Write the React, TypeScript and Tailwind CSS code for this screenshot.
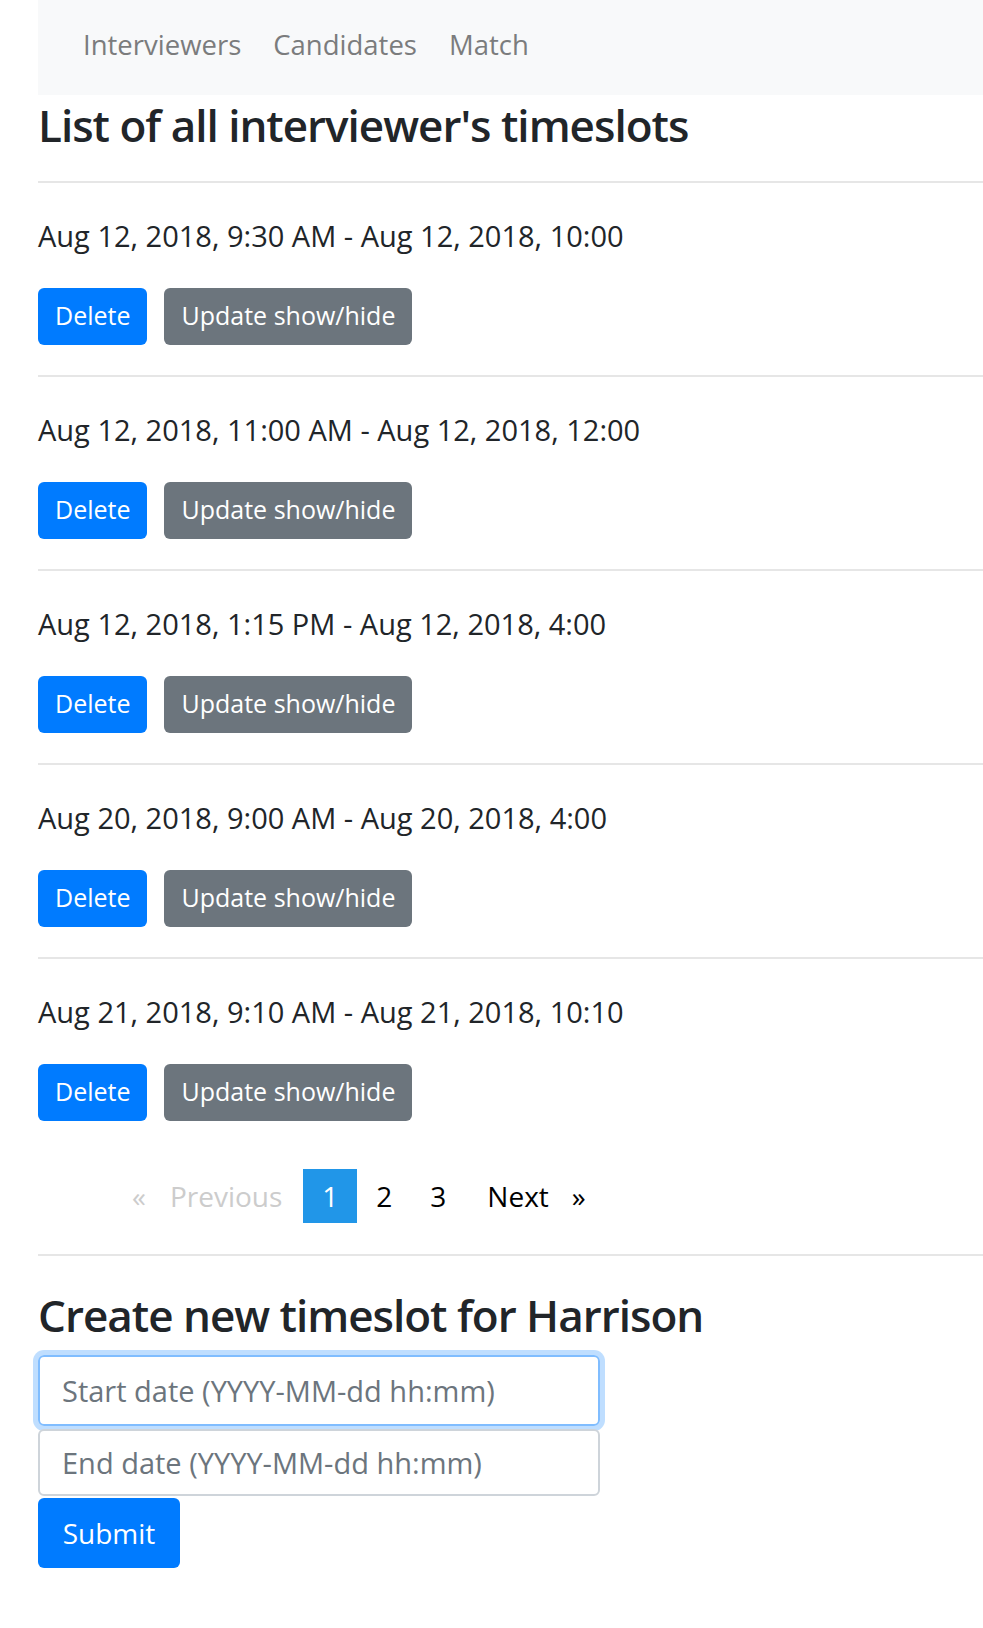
const slots = [
  "Aug 12, 2018, 9:30 AM - Aug 12, 2018, 10:00",
  "Aug 12, 2018, 11:00 AM - Aug 12, 2018, 12:00",
  "Aug 12, 2018, 1:15 PM - Aug 12, 2018, 4:00",
  "Aug 20, 2018, 9:00 AM - Aug 20, 2018, 4:00",
  "Aug 21, 2018, 9:10 AM - Aug 21, 2018, 10:10",
];

export default function App() {
  return (
    <div className="min-h-screen bg-white pl-[38px] text-[#212529] font-['Open_Sans',sans-serif] overflow-hidden">
      {/* Navbar */}
      <nav className="flex h-[95px] items-center gap-[32px] bg-[#f8f9fa] pb-[6px] pl-[45px] text-[27.5px] text-[#7b7c7d]">
        <a href="#">Interviewers</a>
        <a href="#">Candidates</a>
        <a href="#">Match</a>
      </nav>

      <h2 className="mt-[1px] text-[44px] font-semibold leading-[58px] tracking-[-1px]">
        List of all interviewer's timeslots
      </h2>

      <div className="mt-[27px] h-[2px] bg-[#e6e6e6]" />

      {slots.map((s) => (
        <div key={s}>
          <div className="pt-[33px] pb-[30.5px]">
            <p className="text-[29px] leading-[40.5px]">{s}</p>
            <div className="mt-[31px] flex gap-[17px]">
              <button className="h-[57px] rounded-[6px] bg-[#007bff] px-[17px] text-[25px] text-white">
                Delete
              </button>
              <button className="h-[57px] rounded-[6px] bg-[#6c757d] px-[17px] text-[25px] text-white">
                Update show/hide
              </button>
            </div>
          </div>
          {s !== slots[slots.length - 1] && <div className="h-[2px] bg-[#e6e6e6]" />}
        </div>
      ))}

      {/* Pagination */}
      <ul className="mt-[18px] flex h-[54px] items-center pl-[94px] text-[28px]">
        <li className="text-[#cccccc]">«</li>
        <li className="ml-[24px] mr-[21px] text-[#cccccc]">Previous</li>
        <li className="flex h-[54px] w-[54px] items-center justify-center bg-[#2196e8] text-white">1</li>
        <li className="flex h-[54px] w-[54px] items-center justify-center text-black">2</li>
        <li className="flex h-[54px] w-[54px] items-center justify-center text-black">3</li>
        <li className="ml-[22px] text-black">Next</li>
        <li className="ml-[23px] text-black">»</li>
      </ul>

      <div className="mt-[31px] h-[2px] bg-[#e6e6e6]" />

      <h2 className="mt-[30px] text-[44px] font-semibold leading-[58px] tracking-[-1px]">
        Create new timeslot for Harrison
      </h2>

      <form className="mt-[11px] flex w-[562px] flex-col">
        <input
          autoFocus
          placeholder="Start date (YYYY-MM-dd hh:mm)"
          className="h-[71px] rounded-[6px] border-2 border-[#80bdff] px-[22px] text-[29px] outline-none ring-[5px] ring-[#007bff]/25 placeholder:text-[#6c757d]"
        />
        <input
          placeholder="End date (YYYY-MM-dd hh:mm)"
          className="mt-[3px] h-[67px] rounded-[6px] border-2 border-[#ced4da] px-[22px] text-[29px] outline-none placeholder:text-[#6c757d]"
        />
        <button
          type="button"
          className="mt-[2px] h-[70px] w-[142px] rounded-[6px] bg-[#007bff] text-[28px] text-white"
        >
          Submit
        </button>
      </form>
    </div>
  );
}
